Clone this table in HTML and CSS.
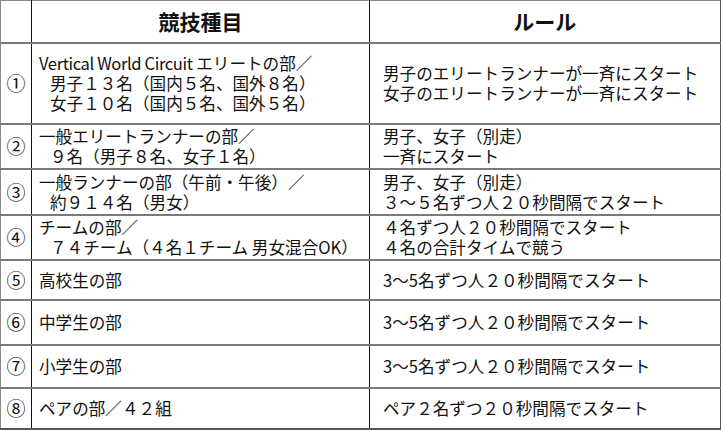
FILE: index.html
```html
<!DOCTYPE html>
<html lang="ja">
<head>
<meta charset="utf-8">
<link rel="stylesheet" href="styles.css">
</head>
<body>
<table class="events">
  <colgroup>
    <col class="c-no">
    <col class="c-name">
    <col class="c-rule">
  </colgroup>
  <thead>
    <tr class="r-head">
      <th></th>
      <th>競技種目</th>
      <th>ルール</th>
    </tr>
  </thead>
  <tbody>
    <tr class="r1">
      <td class="no">①</td>
      <td class="name"><span class="latin">Vertical World Circuit</span> エリートの部／<br><span class="ind">男子１３名（国内５名、国外８名）</span><br><span class="ind">女子１０名（国内５名、国外５名）</span></td>
      <td class="rule">男子のエリートランナーが一斉にスタート<br>女子のエリートランナーが一斉にスタート</td>
    </tr>
    <tr class="r2">
      <td class="no">②</td>
      <td class="name">一般エリートランナーの部／<br><span class="ind">９名（男子８名、女子１名）</span></td>
      <td class="rule">男子、女子（別走）<br>一斉にスタート</td>
    </tr>
    <tr class="r3">
      <td class="no">③</td>
      <td class="name">一般ランナーの部（午前・午後）／<br><span class="ind">約９１４名（男女）</span></td>
      <td class="rule">男子、女子（別走）<br>３～５名ずつ人２０秒間隔でスタート</td>
    </tr>
    <tr class="r4">
      <td class="no">④</td>
      <td class="name">チームの部／<br><span class="ind">７４チーム（４名１チーム 男女混合OK）</span></td>
      <td class="rule">４名ずつ人２０秒間隔でスタート<br>４名の合計タイムで競う</td>
    </tr>
    <tr class="r5">
      <td class="no">⑤</td>
      <td class="name">高校生の部</td>
      <td class="rule">3～5名ずつ人２０秒間隔でスタート</td>
    </tr>
    <tr class="r6">
      <td class="no">⑥</td>
      <td class="name">中学生の部</td>
      <td class="rule">3～5名ずつ人２０秒間隔でスタート</td>
    </tr>
    <tr class="r7">
      <td class="no">⑦</td>
      <td class="name">小学生の部</td>
      <td class="rule">3～5名ずつ人２０秒間隔でスタート</td>
    </tr>
    <tr class="r8">
      <td class="no">⑧</td>
      <td class="name">ペアの部／４２組</td>
      <td class="rule">ペア２名ずつ２０秒間隔でスタート</td>
    </tr>
  </tbody>
</table>
</body>
</html>
```

FILE: styles.css
```css
html, body {
  margin: 0;
  padding: 0;
  background: #fff;
}

body {
  font-family: "Noto Sans CJK JP", "Noto Sans", sans-serif;
  color: #111;
}

.events {
  border-collapse: collapse;
  table-layout: fixed;
  width: 720px;
  font-size: 16.6px;
  line-height: 20px;
}

.c-no { width: 31px; }
.c-name { width: 338px; }
.c-rule { width: 351px; }

.events th,
.events td {
  padding: 0;
  border-top: 2px solid #7a7a7a;
  border-bottom: 2px solid #7a7a7a;
  border-left: 1px solid #111;
  border-right: 1px solid #111;
  vertical-align: middle;
  box-sizing: border-box;
}

.events th {
  font-size: 21px;
  font-weight: bold;
  text-align: center;
  border-top: 1px solid #8a8a8a;
}

.events th:first-child,
.events td:first-child {
  border-left: 1px solid #8a8a8a;
}

.events th:last-child,
.events td:last-child {
  border-right: 2px solid #555;
}

.events tr:last-child td {
  border-bottom: 2px solid #555;
}

.no {
  text-align: center;
  font-size: 19px;
}

.name {
  padding-left: 7px !important;
}

.rule {
  padding-left: 13px !important;
}

.ind {
  padding-left: 11px;
}

.latin {
  letter-spacing: -0.4px;
}

.r-head { height: 42px; }
.r1 { height: 81px; }
.r2 { height: 45px; }
.r3 { height: 46px; }
.r4 { height: 45px; }
.r5 { height: 40px; }
.r6 { height: 45px; }
.r7 { height: 43px; }
.r8 { height: 41px; }
```
